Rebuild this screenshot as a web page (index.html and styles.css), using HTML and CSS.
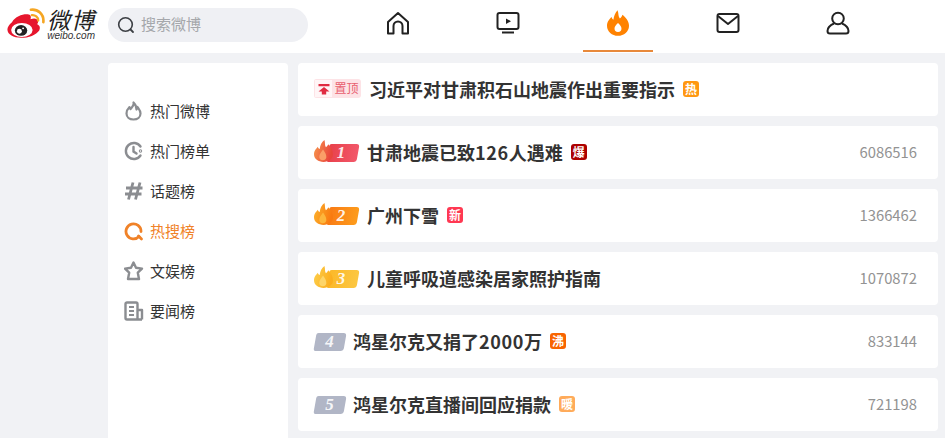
FILE: index.html
```html
<!DOCTYPE html>
<html lang="zh-CN">
<head>
    <meta charset="UTF-8">
    <title>微博热搜榜</title>
    <link rel="stylesheet" href="styles.css">
</head>
<body>
    <!-- 火焰渐变 -->
    <svg class="defs" width="0" height="0">
        <defs>
            <linearGradient id="f1" x1="0" y1="0" x2="1" y2="0.300"><stop offset="0" stop-color="#f89a4c"/><stop offset="1" stop-color="#e8443c"/></linearGradient>
            <linearGradient id="f2" x1="0" y1="0" x2="1" y2="0.300"><stop offset="0" stop-color="#fcb52e"/><stop offset="1" stop-color="#f97a10"/></linearGradient>
            <linearGradient id="f3" x1="0" y1="0" x2="1" y2="0.300"><stop offset="0" stop-color="#fdd04e"/><stop offset="1" stop-color="#fbae1e"/></linearGradient>
        </defs>
    </svg>

    <!-- 顶部导航 -->
    <header class="top">
        <a class="logo">
            <svg class="logo-mark" width="38" height="30" viewBox="0 0 46 36">
                <path d="M6 17C10 10 19 7 25 7.500C29 8 29.500 10.500 28.500 13.500C33 12 37 12.500 37.500 16C38 17.500 37 18.800 36.500 19.500C40 21 40.500 24 39 27C35.500 32.500 26 36 17 36C8 36 0.500 32 0.500 26C0.500 23 2.500 20 6 17Z" fill="#e6162d"/>
                <ellipse cx="18" cy="26.500" rx="13" ry="8.500" fill="#fff"/>
                <ellipse cx="17" cy="27" rx="7.500" ry="6.500" fill="#222"/>
                <circle cx="15" cy="28" r="3" fill="#fff"/>
                <circle cx="19.500" cy="24.500" r="1.200" fill="#fff"/>
                <path d="M29 2C37 1 45 7 44 17" fill="none" stroke="#f5a623" stroke-width="3.200" stroke-linecap="round"/>
                <path d="M30 8.500C34 8 38 11 37.800 15" fill="none" stroke="#f5a623" stroke-width="2.800" stroke-linecap="round"/>
            </svg>
            <span class="logo-text">
                <span class="logo-cn">微博</span>
                <span class="logo-en">weibo.com</span>
            </span>
        </a>
        <div class="search">
            <svg width="18" height="18" viewBox="0 0 18 18"><circle cx="8.500" cy="8.500" r="6.800" fill="none" stroke="#3c3f44" stroke-width="1.600"/><path d="M13.500 13.500L16 16" stroke="#3c3f44" stroke-width="1.800" stroke-linecap="round"/></svg>
            <span class="search-text">搜索微博</span>
        </div>
        <nav class="nav">
            <a class="nav-item">
                <svg width="24" height="24" viewBox="0 0 24 24" fill="none" stroke="#222" stroke-width="2" stroke-linejoin="round"><path d="M2 11L12 2L22 11V22.500H16.500V15A4.500 4.500 0 0 0 7.500 15V22.500H2Z"/></svg>
            </a>
            <a class="nav-item">
                <svg width="24" height="24" viewBox="0 0 24 24" fill="none" stroke="#222" stroke-width="2"><rect x="1.500" y="2" width="21" height="16" rx="2"/><path d="M10 7.500L15 10.300L10 13Z" fill="#222" stroke="none"/><path d="M6 21.500H18"/></svg>
            </a>
            <a class="nav-item nav-on">
                <svg width="22" height="26" viewBox="0 0 24 28"><path d="M11.500 0C13 4 12 6.500 14 9C15.500 8 16.500 6.500 16.800 5C20.500 8 24 12 24 17C24 23.500 18.500 28 12 28C5.500 28 0 23.500 0 17C0 12.500 2.500 10 5 7.500C5.500 9 6 10 7 10.500C7.500 6 9 2.500 11.500 0Z" fill="#ff8200"/><path d="M12 14C14 16 15.800 18 15.800 20A3.800 3.800 0 0 1 8.200 20C8.200 18 10 16 12 14Z" fill="#fff"/></svg>
            </a>
            <a class="nav-item">
                <svg width="24" height="24" viewBox="0 0 24 24" fill="none" stroke="#222" stroke-width="2" stroke-linejoin="round"><rect x="1.500" y="3" width="21" height="18" rx="2"/><path d="M2 5L12 13L22 5"/></svg>
            </a>
            <a class="nav-item">
                <svg width="24" height="24" viewBox="0 0 24 24" fill="none" stroke="#222" stroke-width="2"><circle cx="12" cy="7.500" r="5.800"/><path d="M8 12.500C4.500 14 1.500 17 1.500 20C1.500 21.500 2.500 22.500 4 22.500H20C21.500 22.500 22.500 21.500 22.500 20C22.500 17 19.500 14 16 12.500"/></svg>
            </a>
        </nav>
    </header>

    <div class="main">
        <!-- 左侧菜单 -->
        <aside class="side">
            <a class="side-item">
                <svg width="20" height="20" viewBox="0 0 20 20" fill="none" stroke="#8b8d91" stroke-width="2.200" stroke-linejoin="round"><path d="M9.500 1.500C10.500 4.500 8 6 6.500 8C6 7.500 5.500 7 5.500 6C3.500 8 2.500 10 2.500 12.500C2.500 16 5.500 18.500 9.500 18.500C13.500 18.500 16.500 16 16.500 12.500C16.500 9.500 14.500 7.500 13.500 6C13.500 7 13 8 12.500 8.500C12.500 6 11.500 3.500 9.500 1.500Z"/></svg>
                <span>热门微博</span>
            </a>
            <a class="side-item">
                <svg width="20" height="20" viewBox="0 0 20 20" fill="none" stroke="#8b8d91" stroke-width="2.400" stroke-linecap="round"><path d="M16.500 5.500A8 8 0 1 0 16.500 14.500"/><path d="M9.500 6V10.500L12.500 12.500"/><circle cx="16.500" cy="10" r="0.500"/></svg>
                <span>热门榜单</span>
            </a>
            <a class="side-item">
                <svg width="20" height="20" viewBox="0 0 20 20" fill="none" stroke="#8b8d91" stroke-width="2.800"><path d="M9 1.500L4.500 18.500M16 1.500L11.500 18.500M2 7H18.500M1 13H17.500"/></svg>
                <span>话题榜</span>
            </a>
            <a class="side-item side-on">
                <svg width="20" height="20" viewBox="0 0 20 20" fill="none" stroke="#f08228" stroke-width="2.800" stroke-linecap="round"><path d="M15 15.500A7.500 7.500 0 1 1 17 10.500"/><path d="M14.500 15L17.500 18"/></svg>
                <span>热搜榜</span>
            </a>
            <a class="side-item">
                <svg width="20" height="20" viewBox="0 0 20 20" fill="none" stroke="#8b8d91" stroke-width="2.400" stroke-linejoin="round"><path d="M9.500 1.500L12 6.700L18 7.600L13.800 11.700L15 18H4L5.200 11.700L1 7.600L7 6.700Z"/></svg>
                <span>文娱榜</span>
            </a>
            <a class="side-item">
                <svg width="20" height="20" viewBox="0 0 20 20" fill="none" stroke="#8b8d91" stroke-width="2.400" stroke-linejoin="round"><path d="M18 18.500H3A1.500 1.500 0 0 1 1.500 17V3A1.500 1.500 0 0 1 3 1.500H12A1.500 1.500 0 0 1 13.500 3V18.500M13.500 9H18V18.500"/><path d="M5 6H10M5 10H10M5 14H10" stroke-width="2"/></svg>
                <span>要闻榜</span>
            </a>
        </aside>

        <!-- 热搜列表 -->
        <section class="list">
            <div class="row">
                <span class="pin">
                    <span class="pin-icon"><svg width="12" height="12" viewBox="0 0 12 12" fill="#e02c42"><path d="M0.500 1H11.500V3.200H0.500ZM6 4L11.500 8.500H8.200V11.500H3.800V8.500H0.500Z"/></svg></span>
                    <span class="pin-text">置顶</span>
                </span>
                <span class="title">习近平对甘肃积石山地震作出重要指示</span>
                <span class="tag tag-hot">热</span>
            </div>
            <div class="row">
                <span class="rank rank-1">
                    <span class="rank-bar"></span>
                    <svg class="flame" width="19" height="22" viewBox="0 0 20 23"><path d="M11 0C12 3.500 11 5 12.500 7.500C14 6.500 14.500 5.500 15 4.500C18 8 20 11 20 15C20 20 15.500 23 10 23C4.500 23 0 20 0 15C0 11 2.500 9 4 7C4.500 8.500 5 9 6 9.500C6.500 5.500 8 2 11 0Z" fill="url(#f1)"/><path d="M9.500 10C11.500 13 13 15 13 18A3.800 3.800 0 0 1 5.500 18C5.500 15 7.500 13 9.500 10Z" fill="#fa9f68"/></svg>
                    <i>1</i>
                </span>
                <span class="title">甘肃地震已致<span class="digits">126</span>人遇难</span>
                <span class="tag tag-boom">爆</span>
                <span class="num">6086516</span>
            </div>
            <div class="row">
                <span class="rank rank-2">
                    <span class="rank-bar"></span>
                    <svg class="flame" width="19" height="22" viewBox="0 0 20 23"><path d="M11 0C12 3.500 11 5 12.500 7.500C14 6.500 14.500 5.500 15 4.500C18 8 20 11 20 15C20 20 15.500 23 10 23C4.500 23 0 20 0 15C0 11 2.500 9 4 7C4.500 8.500 5 9 6 9.500C6.500 5.500 8 2 11 0Z" fill="url(#f2)"/><path d="M9.500 10C11.500 13 13 15 13 18A3.800 3.800 0 0 1 5.500 18C5.500 15 7.500 13 9.500 10Z" fill="#fdb63c"/></svg>
                    <i>2</i>
                </span>
                <span class="title">广州下雪</span>
                <span class="tag tag-new">新</span>
                <span class="num">1366462</span>
            </div>
            <div class="row">
                <span class="rank rank-3">
                    <span class="rank-bar"></span>
                    <svg class="flame" width="19" height="22" viewBox="0 0 20 23"><path d="M11 0C12 3.500 11 5 12.500 7.500C14 6.500 14.500 5.500 15 4.500C18 8 20 11 20 15C20 20 15.500 23 10 23C4.500 23 0 20 0 15C0 11 2.500 9 4 7C4.500 8.500 5 9 6 9.500C6.500 5.500 8 2 11 0Z" fill="url(#f3)"/><path d="M9.500 10C11.500 13 13 15 13 18A3.800 3.800 0 0 1 5.500 18C5.500 15 7.500 13 9.500 10Z" fill="#fed568"/></svg>
                    <i>3</i>
                </span>
                <span class="title">儿童呼吸道感染居家照护指南</span>
                <span class="num">1070872</span>
            </div>
            <div class="row">
                <span class="rank rank-gray"><span class="rank-bar"></span><i>4</i></span>
                <span class="title">鸿星尔克又捐了<span class="digits">2000</span>万</span>
                <span class="tag tag-boil">沸</span>
                <span class="num">833144</span>
            </div>
            <div class="row">
                <span class="rank rank-gray"><span class="rank-bar"></span><i>5</i></span>
                <span class="title">鸿星尔克直播间回应捐款</span>
                <span class="tag tag-warm">暖</span>
                <span class="num">721198</span>
            </div>
        </section>
    </div>
</body>
</html>
```

FILE: styles.css
```css
* {
    margin: 0;
    padding: 0;
    box-sizing: border-box;
}
html, body {
    height: 100%;
    overflow: hidden;
}
body {
    background: #f1f2f5;
    font-family: "Noto Sans CJK SC", "Noto Sans", sans-serif;
    color: #333;
    display: flex;
    flex-direction: column;
}
.defs {
    display: block;
    flex: none;
}
.top {
    height: 53px;
    flex: none;
    background: #fff;
    display: flex;
    align-items: flex-start;
}
.logo {
    width: 108px;
    flex: none;
    display: flex;
    padding: 8px 0 0 7px;
}
.logo-mark {
    flex: none;
}
.logo-text {
    display: flex;
    flex-direction: column;
    align-items: flex-end;
    width: 50px;
}
.logo-cn {
    font-size: 23px;
    line-height: 22px;
    letter-spacing: 1px;
    font-style: italic;
    color: #222;
    white-space: nowrap;
}
.logo-en {
    font-family: "Liberation Sans", sans-serif;
    font-size: 10px;
    line-height: 9px;
    margin-top: 1px;
    font-style: italic;
    color: #333;
}
.search {
    width: 200px;
    height: 34px;
    margin-top: 8px;
    padding-left: 9px;
    border-radius: 17px;
    background: #eff0f4;
    display: flex;
    align-items: center;
    gap: 6px;
    flex: none;
}
.search-text {
    font-size: 15px;
    padding-bottom: 3px;
    color: #a5a7ab;
}
.nav {
    display: flex;
    margin-left: 35px;
}
.nav-item {
    width: 110px;
    height: 53px;
    display: flex;
    justify-content: center;
    align-items: center;
    padding-bottom: 8px;
    position: relative;
}
.nav-on::after {
    content: "";
    position: absolute;
    left: 20px;
    right: 20px;
    bottom: 1px;
    height: 2px;
    background: #e8893a;
}
.main {
    flex: 1;
    display: flex;
    gap: 10px;
    padding: 10px 7px 0 108px;
    min-height: 0;
}
.side {
    width: 180px;
    flex: none;
    background: #fff;
    padding-top: 28px;
    border-radius: 4px 4px 0 0;
}
.side-item {
    height: 40px;
    display: flex;
    align-items: center;
    gap: 6px;
    padding: 0 0 1px 16px;
    font-size: 15px;
    color: #333;
}
.side-item svg {
    flex: none;
}
.side-on {
    color: #f08228;
}
.list {
    flex: 1;
    display: flex;
    flex-direction: column;
    gap: 10px;
}
.row {
    height: 53px;
    flex: none;
    background: #fff;
    border-radius: 4px;
    display: flex;
    align-items: center;
    padding: 0 21px 2px 16px;
}
.title {
    font-size: 18px;
    font-weight: 700;
    color: #333;
    white-space: nowrap;
}
.digits {
    letter-spacing: 0.6px;
}
.num {
    margin-left: auto;
    font-size: 14.8px;
    color: #939393;
}
.pin {
    width: 47px;
    height: 19px;
    display: flex;
    border-radius: 3px;
    overflow: hidden;
    background: #fde3e6;
    margin-right: 8px;
}
.pin-icon {
    width: 18px;
    flex: none;
    background: #fff5f6;
    border: 1px solid #fde3e6;
    border-right: 0;
    display: flex;
    justify-content: center;
    align-items: center;
}
.pin-text {
    flex: 1;
    text-align: center;
    font-size: 12px;
    line-height: 18px;
    color: #e8606f;
}
.tag {
    width: 16px;
    height: 16px;
    margin-left: 8px;
    border-radius: 3px;
    font-size: 12px;
    font-weight: 700;
    line-height: 15px;
    text-align: center;
    color: #fff;
    flex: none;
}
.tag-hot { background: #ff9812; }
.tag-boom { background: #ad0000; }
.tag-new { background: #ff3852; }
.tag-boil { background: #f86400; }
.tag-warm { background: #ffab5a; }
.rank {
    width: 44px;
    height: 18px;
    margin: 2px 9px 0 0;
    position: relative;
    display: flex;
    align-items: center;
    justify-content: center;
    flex: none;
}
.rank-bar {
    position: absolute;
    left: 14px;
    right: 0;
    top: 0;
    bottom: 0;
    transform: skewX(-10deg);
    border-radius: 2px 3px 3px 2px;
}
.rank i {
    position: relative;
    font-family: "Liberation Serif", serif;
    font-size: 17px;
    font-weight: 700;
    color: rgba(255, 255, 255, 0.9);
    padding-left: 10px;
}
.flame {
    position: absolute;
    left: 0;
    bottom: 0;
}
.rank-1 .rank-bar { background: linear-gradient(90deg, #e8404a, #f2586a); }
.rank-2 .rank-bar { background: linear-gradient(90deg, #f97a14, #fd9c1c); }
.rank-3 .rank-bar { background: linear-gradient(90deg, #fbb828, #fcc742); }
.rank-gray {
    width: 31px;
    margin-right: 8px;
}
.rank-gray .rank-bar {
    left: 1px;
    background: #b1b6c6;
}
.rank-gray i {
    padding-left: 0;
}
```
